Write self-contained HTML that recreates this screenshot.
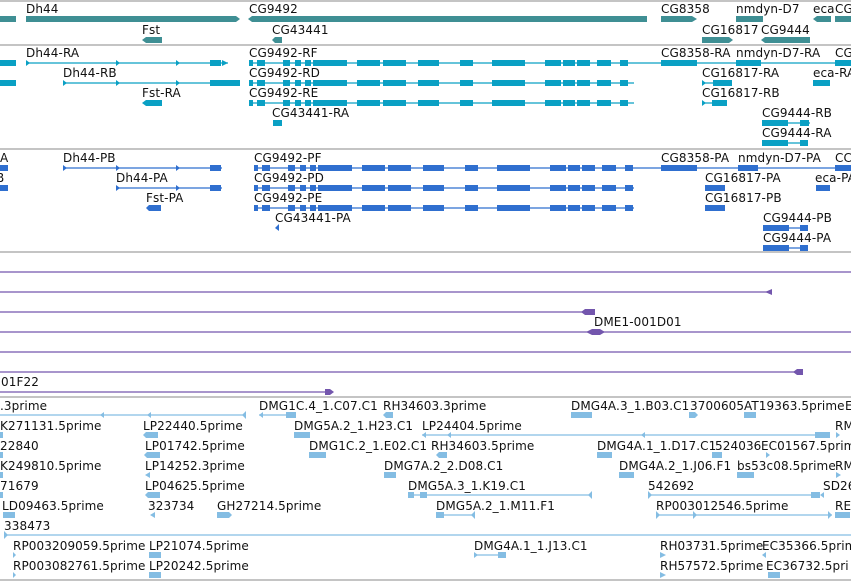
<!DOCTYPE html>
<html><head><meta charset="utf-8"><style>
html,body{margin:0;padding:0;background:#fff;width:851px;height:581px;overflow:hidden}
svg{display:block}
text{font-family:"DejaVu Sans","Liberation Sans",sans-serif;font-size:12px;fill:#111;letter-spacing:0.1px}
.sep{stroke:#c4c4c4;stroke-width:2}
.g rect,.g polygon{fill:#3f8f94}
.t{color:#0aa0c4}.t line{stroke:#0aa0c4;stroke-width:1.3}.t rect,.t polygon{fill:#0aa0c4}
.p{color:#2f6fcf}.p line{stroke:#2f6fcf;stroke-width:1.3}.p rect,.p polygon{fill:#2f6fcf}
.u line{stroke:#7356ad;stroke-width:1.3}.u rect,.u polygon{fill:#7356ad}
.e line{stroke:#84bde3;stroke-width:1.3}.e rect,.e polygon{fill:#84bde3}
</style></head><body>
<svg width="851" height="581" xmlns="http://www.w3.org/2000/svg">
<defs>
<g id="cg" fill="currentColor">
<rect x="0" y="-3" width="4" height="6"/><rect x="8" y="-3" width="8" height="6"/><rect x="34" y="-3" width="7" height="6"/><rect x="46" y="-3" width="6" height="6"/><rect x="56" y="-3" width="6" height="6"/><rect x="64" y="-3" width="34" height="6"/><rect x="108" y="-3" width="23" height="6"/><rect x="134" y="-3" width="23" height="6"/><rect x="169" y="-3" width="21" height="6"/><rect x="211" y="-3" width="13" height="6"/><rect x="243" y="-3" width="33" height="6"/><rect x="296" y="-3" width="16" height="6"/><rect x="314" y="-3" width="12" height="6"/><rect x="328" y="-3" width="13" height="6"/><rect x="348" y="-3" width="14" height="6"/><rect x="371" y="-3" width="8" height="6"/>
</g>
</defs>
<line class="sep" x1="0" y1="1" x2="851" y2="1"/>
<line class="sep" x1="0" y1="45" x2="851" y2="45"/>
<line class="sep" x1="0" y1="149" x2="851" y2="149"/>
<line class="sep" x1="0" y1="252" x2="851" y2="252"/>
<line class="sep" x1="0" y1="397" x2="851" y2="397"/>
<line class="sep" x1="0" y1="580" x2="851" y2="580"/>

<g class="g">
<rect x="0" y="16" width="16" height="6"/><rect x="26" y="16" width="210" height="6"/><polygon points="236,16 240,19 236,22"/>
<rect x="252" y="16" width="395" height="6"/><polygon points="252,16 248,19 252,22"/>
<rect x="661" y="16" width="31" height="6"/><polygon points="692,16 697,19 692,22"/>
<rect x="736" y="16" width="27" height="6"/>
<rect x="817" y="16" width="14" height="6"/><polygon points="817,16 813,19 817,22"/>
<rect x="835" y="16" width="16" height="6"/>
<rect x="146" y="37" width="16" height="6"/><polygon points="146,37 142,40 146,43"/>
<rect x="275" y="37" width="7" height="6"/><polygon points="275,37 272,40 275,43"/>
<rect x="702" y="37" width="27" height="6"/><polygon points="729,37 733,40 729,43"/>
<rect x="765" y="37" width="45" height="6"/><polygon points="765,37 761,40 765,43"/>
</g>
<text x="26" y="13">Dh44</text><text x="249" y="13">CG9492</text><text x="661" y="13">CG8358</text><text x="736" y="13">nmdyn-D7</text><text x="813" y="13">eca</text><text x="835" y="13">CG</text>
<text x="142" y="34">Fst</text><text x="272" y="34">CG43441</text><text x="702" y="34">CG16817</text><text x="761" y="34">CG9444</text>

<g class="t">
<rect x="0" y="60" width="16" height="6"/><line x1="26" y1="63" x2="228" y2="63"/><rect x="210" y="60" width="11" height="6"/><polygon points="26,60 30,63 26,66"/><polygon points="116,60 120,63 116,66"/><polygon points="176,60 180,63 176,66"/><polygon points="222,60 228,63 222,66"/>
<line x1="249" y1="63" x2="851" y2="63"/><use href="#cg" x="249" y="63"/>
<rect x="661" y="60" width="36" height="6"/><rect x="736" y="60" width="25" height="6"/><rect x="835" y="60" width="16" height="6"/>
<rect x="0" y="80" width="16" height="6"/><line x1="63" y1="83" x2="240" y2="83"/><rect x="210" y="80" width="30" height="6"/><polygon points="63,80 67,83 63,86"/><polygon points="116,80 120,83 116,86"/><polygon points="176,80 180,83 176,86"/>
<line x1="249" y1="83" x2="634" y2="83"/><use href="#cg" x="249" y="83"/>
<line x1="702" y1="83" x2="732" y2="83"/><rect x="713" y="80" width="19" height="6"/><polygon points="702,80 706,83 702,86"/>
<rect x="813" y="80" width="17" height="6"/>
<rect x="146" y="100" width="16" height="6"/><polygon points="146,100 142,103 146,106"/>
<line x1="249" y1="103" x2="634" y2="103"/><use href="#cg" x="249" y="103"/>
<line x1="702" y1="103" x2="727" y2="103"/><rect x="712" y="100" width="15" height="6"/><polygon points="702,100 706,103 702,106"/>
<rect x="273" y="120" width="9" height="6"/>
<line x1="762" y1="123" x2="810" y2="123"/><rect x="762" y="120" width="26" height="6"/><rect x="800" y="120" width="9" height="6"/>
<line x1="762" y1="143" x2="808" y2="143"/><rect x="762" y="140" width="26" height="6"/><rect x="800" y="140" width="8" height="6"/>
</g>
<text x="26" y="57">Dh44-RA</text><text x="249" y="57">CG9492-RF</text><text x="661" y="57">CG8358-RA</text><text x="736" y="57">nmdyn-D7-RA</text><text x="835" y="57">CG</text>
<text x="63" y="77">Dh44-RB</text><text x="249" y="77">CG9492-RD</text><text x="702" y="77">CG16817-RA</text><text x="813" y="77">eca-RA</text>
<text x="142" y="97">Fst-RA</text><text x="249" y="97">CG9492-RE</text><text x="702" y="97">CG16817-RB</text>
<text x="272" y="117">CG43441-RA</text><text x="762" y="117">CG9444-RB</text>
<text x="762" y="137">CG9444-RA</text>

<g class="p">
<rect x="0" y="165" width="8" height="6"/><line x1="63" y1="168" x2="222" y2="168"/><rect x="210" y="165" width="11" height="6"/><polygon points="63,165 67,168 63,171"/><polygon points="116,165 120,168 116,171"/><polygon points="176,165 180,168 176,171"/>
<line x1="254" y1="168" x2="851" y2="168"/><use href="#cg" x="254" y="168"/>
<rect x="661" y="165" width="36" height="6"/><rect x="738" y="165" width="20" height="6"/><rect x="835" y="165" width="16" height="6"/>
<rect x="0" y="185" width="8" height="6"/><line x1="116" y1="188" x2="222" y2="188"/><rect x="210" y="185" width="11" height="6"/><polygon points="116,185 120,188 116,191"/><polygon points="176,185 180,188 176,191"/>
<line x1="254" y1="188" x2="634" y2="188"/><use href="#cg" x="254" y="188"/>
<rect x="705" y="185" width="20" height="6"/><rect x="816" y="185" width="14" height="6"/>
<rect x="149" y="205" width="12" height="6"/><polygon points="149,205 146,208 149,211"/>
<line x1="254" y1="208" x2="634" y2="208"/><use href="#cg" x="254" y="208"/>
<rect x="705" y="205" width="20" height="6"/>
<polygon points="279,224 275,228 279,231"/>
<line x1="763" y1="228" x2="808" y2="228"/><rect x="763" y="225" width="26" height="6"/><rect x="800" y="225" width="8" height="6"/>
<line x1="763" y1="248" x2="808" y2="248"/><rect x="763" y="245" width="26" height="6"/><rect x="800" y="245" width="8" height="6"/>
</g>
<text x="0" y="162">A</text><text x="63" y="162">Dh44-PB</text><text x="254" y="162">CG9492-PF</text><text x="661" y="162">CG8358-PA</text><text x="738" y="162">nmdyn-D7-PA</text><text x="835" y="162">CC</text>
<text x="-4" y="182">B</text><text x="116" y="182">Dh44-PA</text><text x="254" y="182">CG9492-PD</text><text x="705" y="182">CG16817-PA</text><text x="815" y="182">eca-PA</text>
<text x="146" y="202">Fst-PA</text><text x="254" y="202">CG9492-PE</text><text x="705" y="202">CG16817-PB</text>
<text x="275" y="222">CG43441-PA</text><text x="763" y="222">CG9444-PB</text>
<text x="763" y="242">CG9444-PA</text>

<g class="u">
<line x1="0" y1="272" x2="851" y2="272"/>
<line x1="0" y1="292" x2="772" y2="292"/><polygon points="772,289 765,292 772,295"/>
<line x1="0" y1="312" x2="585" y2="312"/><rect x="585" y="309" width="10" height="6"/><polygon points="585,309 581,312 585,315"/>
<line x1="0" y1="332" x2="851" y2="332"/><polygon points="586,332 592,329 600,329 605,332 600,335 592,335"/>
<line x1="0" y1="352" x2="851" y2="352"/>
<line x1="0" y1="372" x2="803" y2="372"/><rect x="797" y="369" width="6" height="6"/><polygon points="797,369 793,372 797,375"/>
<line x1="0" y1="392" x2="328" y2="392"/><rect x="325" y="389" width="5" height="6"/><polygon points="330,389 334,392 330,395"/>
</g>
<text x="594" y="326">DME1-001D01</text>
<text x="1" y="386">01F22</text>

<g class="e">
<line x1="0" y1="415" x2="246" y2="415"/><polygon points="104,412 100,415 104,418"/><polygon points="151,412 147,415 151,418"/><polygon points="246,411 242,415 246,419"/>
<line x1="259" y1="415" x2="296" y2="415"/><rect x="286" y="412" width="10" height="6"/><polygon points="263,412 259,415 263,418"/>
<rect x="386" y="412" width="7" height="6"/><polygon points="386,412 383,415 386,418"/>
<rect x="571" y="412" width="21" height="6"/><rect x="689" y="412" width="6" height="6"/><polygon points="695,412 698,415 695,418"/><rect x="744" y="412" width="12" height="6"/>
<rect x="0" y="432" width="3" height="6"/><rect x="146" y="432" width="12" height="6"/><polygon points="146,432 143,435 146,438"/><rect x="294" y="432" width="16" height="6"/>
<line x1="422" y1="435" x2="820" y2="435"/><polygon points="426,432 422,435 426,438"/><polygon points="451,432 447,435 451,438"/><polygon points="645,432 641,435 645,438"/><rect x="815" y="432" width="15" height="6"/><polygon points="836,432 840,435 836,438"/>
<rect x="0" y="452" width="3" height="6"/><rect x="147" y="452" width="13" height="6"/><polygon points="147,452 144,455 147,458"/><rect x="309" y="452" width="17" height="6"/><rect x="439" y="452" width="8" height="6"/><polygon points="439,452 436,455 439,458"/><rect x="597" y="452" width="15" height="6"/><rect x="712" y="452" width="10" height="6"/><polygon points="766,452 770,455 766,458"/>
<rect x="0" y="472" width="3" height="6"/><polygon points="150,472 145,475 150,478"/><rect x="384" y="472" width="12" height="6"/><rect x="619" y="472" width="15" height="6"/><rect x="737" y="472" width="17" height="6"/><polygon points="836,472 841,475 836,478"/>
<rect x="0" y="492" width="3" height="6"/><rect x="148" y="492" width="12" height="6"/><polygon points="148,492 145,495 148,498"/>
<line x1="408" y1="495" x2="592" y2="495"/><rect x="408" y="492" width="6" height="6"/><rect x="420" y="492" width="7" height="6"/><polygon points="592,491 588,495 592,499"/>
<line x1="648" y1="495" x2="818" y2="495"/><polygon points="648,491 652,495 648,499"/><rect x="811" y="492" width="9" height="6"/><polygon points="824,492 820,495 824,498"/>
<rect x="3" y="512" width="12" height="6"/><polygon points="155,512 150,515 155,518"/><rect x="217" y="512" width="12" height="6"/><polygon points="229,512 232,515 229,518"/>
<line x1="436" y1="515" x2="475" y2="515"/><rect x="436" y="512" width="8" height="6"/><polygon points="475,511 471,515 475,519"/>
<line x1="656" y1="515" x2="832" y2="515"/><polygon points="656,511 660,515 656,519"/><polygon points="693,511 697,515 693,519"/><polygon points="828,511 832,515 828,519"/><rect x="835" y="512" width="15" height="6"/>
<line x1="4" y1="535" x2="851" y2="535"/><polygon points="4,531 8,535 4,539"/>
<polygon points="13,552 16,555 13,558"/><rect x="149" y="552" width="12" height="6"/>
<line x1="474" y1="555" x2="506" y2="555"/><polygon points="474,552 478,555 474,558"/><rect x="498" y="552" width="8" height="6"/>
<polygon points="660,552 666,555 660,558"/><polygon points="766,552 762,555 766,558"/>
<polygon points="13,572 16,575 13,578"/><rect x="149" y="572" width="12" height="6"/><polygon points="660,572 666,575 660,578"/><rect x="768" y="572" width="12" height="6"/>
</g>
<text x="0" y="410">.3prime</text><text x="259" y="410">DMG1C.4_1.C07.C1</text><text x="383" y="410">RH34603.3prime</text><text x="571" y="410">DMG4A.3_1.B03.C1</text><text x="690" y="410">3700605</text><text x="744" y="410">AT19363.5prime</text><text x="845" y="410">E</text>
<text x="0" y="430">K271131.5prime</text><text x="143" y="430">LP22440.5prime</text><text x="294" y="430">DMG5A.2_1.H23.C1</text><text x="422" y="430">LP24404.5prime</text><text x="835" y="430">RM</text>
<text x="0" y="450">22840</text><text x="145" y="450">LP01742.5prime</text><text x="309" y="450">DMG1C.2_1.E02.C1</text><text x="431" y="450">RH34603.5prime</text><text x="597" y="450">DMG4A.1_1.D17.C1</text><text x="715" y="450">524036</text><text x="761" y="450">EC01567.5prime</text>
<text x="0" y="470">K249810.5prime</text><text x="145" y="470">LP14252.3prime</text><text x="384" y="470">DMG7A.2_2.D08.C1</text><text x="619" y="470">DMG4A.2_1.J06.F1</text><text x="737" y="470">bs53c08.5prime</text><text x="835" y="470">RM</text>
<text x="0" y="490">71679</text><text x="145" y="490">LP04625.5prime</text><text x="408" y="490">DMG5A.3_1.K19.C1</text><text x="648" y="490">542692</text><text x="823" y="490">SD26</text>
<text x="2" y="510">LD09463.5prime</text><text x="148" y="510">323734</text><text x="217" y="510">GH27214.5prime</text><text x="436" y="510">DMG5A.2_1.M11.F1</text><text x="656" y="510">RP003012546.5prime</text><text x="835" y="510">RE</text>
<text x="4" y="530">338473</text>
<text x="13" y="550">RP003209059.5prime</text><text x="149" y="550">LP21074.5prime</text><text x="474" y="550">DMG4A.1_1.J13.C1</text><text x="660" y="550">RH03731.5prime</text><text x="762" y="550">EC35366.5prime</text>
<text x="13" y="570">RP003082761.5prime</text><text x="149" y="570">LP20242.5prime</text><text x="660" y="570">RH57572.5prime</text><text x="766" y="570">EC36732.5pri</text>
</svg>
</body></html>
